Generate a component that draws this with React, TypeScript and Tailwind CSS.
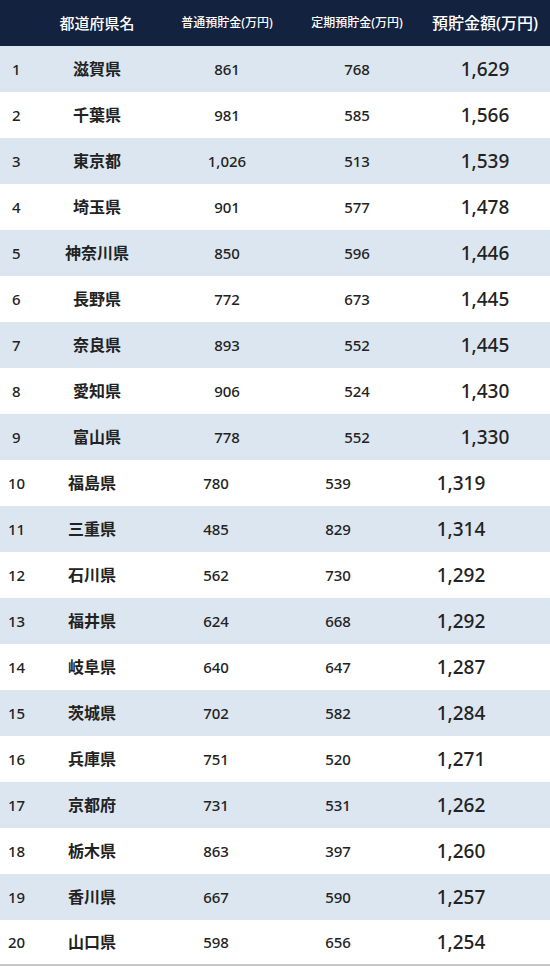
const ROWS = [
  ["滋賀県", "861", "768", "1,629"],
  ["千葉県", "981", "585", "1,566"],
  ["東京都", "1,026", "513", "1,539"],
  ["埼玉県", "901", "577", "1,478"],
  ["神奈川県", "850", "596", "1,446"],
  ["長野県", "772", "673", "1,445"],
  ["奈良県", "893", "552", "1,445"],
  ["愛知県", "906", "524", "1,430"],
  ["富山県", "778", "552", "1,330"],
  ["福島県", "780", "539", "1,319"],
  ["三重県", "485", "829", "1,314"],
  ["石川県", "562", "730", "1,292"],
  ["福井県", "624", "668", "1,292"],
  ["岐阜県", "640", "647", "1,287"],
  ["茨城県", "702", "582", "1,284"],
  ["兵庫県", "751", "520", "1,271"],
  ["京都府", "731", "531", "1,262"],
  ["栃木県", "863", "397", "1,260"],
  ["香川県", "667", "590", "1,257"],
  ["山口県", "598", "656", "1,254"],
];

const FONT = "font-['Noto_Sans','Noto_Sans_CJK_JP',sans-serif]";

export default function App() {
  return (
    <div className={`w-[550px] bg-white text-[#222] ${FONT}`}>
      {/* header */}
      <div className="grid h-[46px] grid-cols-[40px_114px_146px_114px_136px] items-center bg-[#13223f] text-white">
        <div />
        <div className="text-center text-[15px] font-medium">都道府県名</div>
        <div className="text-center text-[12px] font-medium">普通預貯金(万円)</div>
        <div className="text-center text-[12px] font-medium">定期預貯金(万円)</div>
        <div className="pl-[6px] text-center text-[16px] font-medium">預貯金額(万円)</div>
      </div>

      {ROWS.map((r, i) => {
        const late = i >= 9;
        return (
          <div
            key={r[0]}
            className={`grid h-[46px] items-center ${
              i % 2 === 0 ? "bg-[#dce6f0]" : "bg-white"
            } ${
              late
                ? "grid-cols-[40px_104px_144px_100px_146px]"
                : "grid-cols-[40px_114px_146px_114px_136px]"
            } ${i === ROWS.length - 1 ? "border-b-2 border-[#c8c8c8]" : ""}`}
          >
            <div className={`text-[15px] font-medium ${late ? "pl-[8px]" : "pl-[12px]"}`}>{i + 1}</div>
            <div className="text-center text-[16px] font-semibold">{r[0]}</div>
            <div className="text-center text-[15px] font-medium">{r[1]}</div>
            <div className="text-center text-[15px] font-medium">{r[2]}</div>
            <div className={`text-center text-[19px] font-medium ${late ? "" : "pl-[6px]"}`}>{r[3]}</div>
          </div>
        );
      })}
    </div>
  );
}
